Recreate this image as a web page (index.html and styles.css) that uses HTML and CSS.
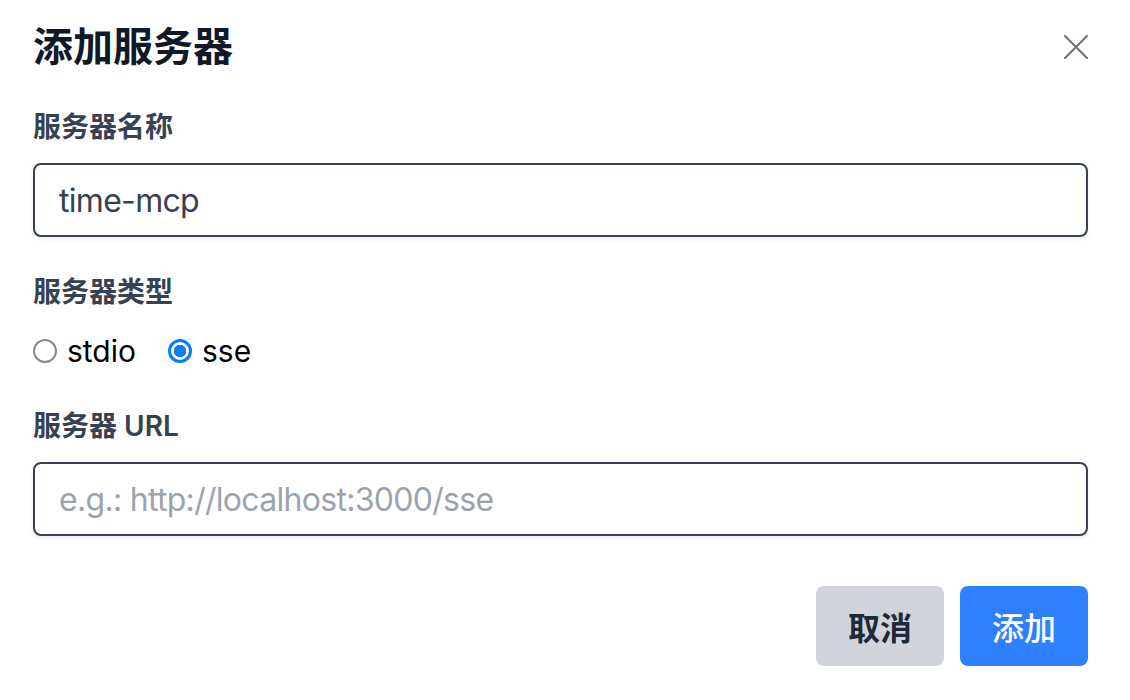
FILE: index.html
```html
<!DOCTYPE html>
<html lang="zh-CN">
<head>
    <meta charset="UTF-8">
    <meta name="viewport" content="width=device-width, initial-scale=1.0">
    <title>添加服务器</title>
    <link rel="stylesheet" href="styles.css">
</head>
<body>
    <div class="modal">
        <div class="modal-header">
            <h1>添加服务器</h1>
            <button class="close-btn" aria-label="关闭">
                <svg width="24" height="24" viewBox="0 0 24 24" fill="none" stroke="currentColor" stroke-width="2" stroke-linecap="round">
                    <path d="M1 1L23 23M23 1L1 23"/>
                </svg>
            </button>
        </div>

        <div class="field">
            <label class="field-label" for="name">服务器名称</label>
            <input class="text-input" id="name" type="text" value="time-mcp">
        </div>

        <div class="field field-radio">
            <div class="field-label">服务器类型</div>
            <div class="radio-row">
                <label class="radio"><input type="radio" name="type" value="stdio"> stdio</label>
                <label class="radio"><input type="radio" name="type" value="sse" checked> sse</label>
            </div>
        </div>

        <div class="field">
            <label class="field-label" for="url">服务器 URL</label>
            <input class="text-input" id="url" type="text" placeholder="e.g.: http://localhost:3000/sse">
        </div>

        <div class="actions">
            <button class="btn btn-cancel">取消</button>
            <button class="btn btn-primary">添加</button>
        </div>
    </div>
</body>
</html>
```

FILE: styles.css
```css
body {
    margin: 0;
    background: #ffffff;
    font-family: 'Inter', 'Noto Sans CJK SC', sans-serif;
    color: #111827;
}

.modal {
    width: 1055px;
    margin-left: 33px;
    padding-top: 19px;
}

.modal-header {
    display: flex;
    justify-content: space-between;
    align-items: center;
    height: 56px;
    margin-bottom: 32px;
}

.modal-header h1 {
    margin: 0;
    font-size: 40px;
    line-height: 56px;
    font-weight: 700;
    color: #111827;
}

.close-btn {
    background: none;
    border: none;
    padding: 0;
    color: #6b7280;
    display: flex;
    cursor: pointer;
}

.field {
    margin-bottom: 35px;
}

.field-radio {
    margin-bottom: 31px;
}

.field-label {
    display: block;
    font-size: 28px;
    line-height: 40px;
    font-weight: 600;
    color: #374151;
    margin-bottom: 16px;
}

.text-input {
    display: block;
    box-sizing: border-box;
    width: 100%;
    height: 74px;
    padding: 0 24px;
    border: 2px solid #374151;
    border-radius: 8px;
    box-shadow: 0 2px 4px rgba(0, 0, 0, 0.08);
    font-family: inherit;
    font-size: 32px;
    letter-spacing: -0.7px;
    color: #374151;
    outline: none;
}

.text-input::placeholder {
    color: #9ca3af;
}

.radio-row {
    display: flex;
    gap: 32px;
    height: 48px;
    align-items: center;
    margin-top: -1px;
}

.radio {
    display: flex;
    align-items: center;
    gap: 10px;
    font-size: 30px;
    color: #000000;
}

.radio input {
    appearance: none;
    -webkit-appearance: none;
    width: 24px;
    height: 24px;
    margin: 0;
    border: 2px solid #8a8a8a;
    border-radius: 50%;
    background: #ffffff;
}

.radio input:checked {
    border: 3px solid #0a7aff;
    background: radial-gradient(circle, #0a7aff 0 6px, #ffffff 6.5px);
}

.actions {
    display: flex;
    justify-content: flex-end;
    gap: 16px;
    margin-top: 50px;
}

.btn {
    width: 128px;
    height: 80px;
    border: none;
    border-radius: 8px;
    font-family: inherit;
    font-size: 32px;
    cursor: pointer;
}

.btn-cancel {
    background: #d1d5db;
    color: #1f2937;
    font-weight: 600;
}

.btn-primary {
    background: #2f80ff;
    color: #ffffff;
    font-weight: 500;
}
```
